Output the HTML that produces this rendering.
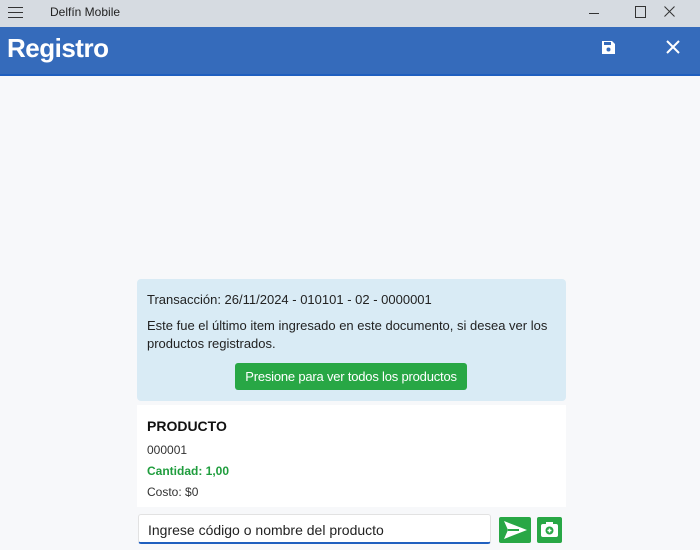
<!DOCTYPE html><html><head><style>
body{margin:0;width:700px;height:550px;background:#f7f8fa;font-family:"Liberation Sans",sans-serif;position:relative;overflow:hidden}
.tb{position:absolute;top:0;left:0;width:700px;height:27px;background:#d6dbe1;font-size:12px;color:#222}
.hd{position:absolute;top:27px;left:0;width:700px;height:47px;background:#356bbb;border-bottom:2px solid #1f5fbf}
.a{position:absolute}
</style></head><body>
<div class="tb">
<div class="a" style="left:8px;top:7px;width:15px;height:1px;background:#333;box-shadow:0 5px 0 #333,0 10px 0 #333"></div>
<div class="a" style="left:50px;top:5px">Delfín Mobile</div>
<div class="a" style="left:589px;top:13px;width:10px;height:1px;background:#333"></div>
<div class="a" style="left:635px;top:6px;width:9px;height:10px;border:1px solid #333"></div>
<svg class="a" style="left:664px;top:6px" width="11" height="11"><path d="M0.5 0.5L10.5 10.5M10.5 0.5L0.5 10.5" stroke="#333" stroke-width="1"/></svg>
</div>
<div class="hd">
<div class="a" style="left:7px;top:6px;color:#fff;font-size:26px;font-weight:bold;letter-spacing:-0.5px">Registro</div>
<svg class="a" style="left:601px;top:13px" width="15" height="15" viewBox="0 0 15 15"><path d="M1 1h10l3 3v10H1z" fill="#fff"/><rect x="3" y="2" width="7" height="3" fill="#356bbb"/><circle cx="7.5" cy="9.5" r="2" fill="#356bbb"/></svg>
<svg class="a" style="left:666px;top:13px" width="14" height="14"><path d="M1 1L13 13M13 1L1 13" stroke="#fff" stroke-width="2"/></svg>
</div>
<div class="a" style="left:137px;top:279px;width:429px;height:122px;background:#d9ebf5;border-radius:4px;font-size:13px;color:#222">
<div class="a" style="left:10px;top:13px">Transacción: 26/11/2024 - 010101 - 02 - 0000001</div>
<div class="a" style="left:10px;top:38px;width:410px;line-height:18px">Este fue el último item ingresado en este documento, si desea ver los productos registrados.</div>
<div class="a" style="left:98px;top:84px;width:232px;height:27px;background:#28a745;border-radius:3px;color:#fff;font-size:13px;text-align:center;line-height:27px;white-space:nowrap;letter-spacing:-0.2px">Presione para ver todos los productos</div>
</div>
<div class="a" style="left:137px;top:405px;width:429px;height:102px;background:#fff;color:#333">
<div class="a" style="left:10px;top:13px;font-weight:bold;font-size:14px;color:#111">PRODUCTO</div>
<div class="a" style="left:10px;top:38px;font-size:12px">000001</div>
<div class="a" style="left:10px;top:59px;font-size:12px;font-weight:bold;color:#1f9d3d">Cantidad: 1,00</div>
<div class="a" style="left:10px;top:80px;font-size:12px">Costo: $0</div>
</div>
<div class="a" style="left:138px;top:514px;width:353px;height:30px;background:#fff;border:1px solid #e2e2e2;border-bottom:2px solid #1f5fbf;border-radius:3px;font-size:14px;color:#222;line-height:30px;text-indent:9px;box-sizing:border-box">Ingrese código o nombre del producto</div>
<div class="a" style="left:499px;top:517px;width:32px;height:26px;background:#28a745;border-radius:2px"><svg width="32" height="26"><path d="M5 4L28 13L5 22L9 13z" fill="#fff"/><path d="M9 13H20" stroke="#28a745" stroke-width="2"/></svg></div>
<div class="a" style="left:537px;top:517px;width:25px;height:26px;background:#28a745;border-radius:2px"><svg width="25" height="26"><rect x="4" y="7" width="17" height="13" rx="2" fill="#fff"/><rect x="9" y="5" width="7" height="3" fill="#fff"/><circle cx="12.5" cy="13.5" r="4" fill="#28a745"/><path d="M12.5 11.5v4M10.5 13.5h4" stroke="#fff" stroke-width="1.5"/></svg></div>
</body></html>
